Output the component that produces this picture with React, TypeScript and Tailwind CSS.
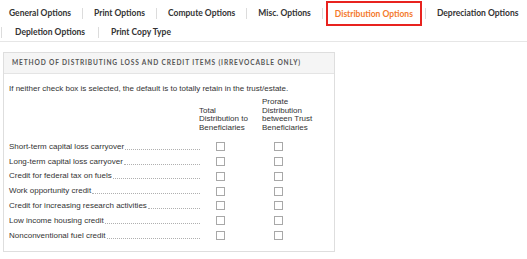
import React from "react";

const rows = [
  "Short-term capital loss carryover",
  "Long-term capital loss carryover",
  "Credit for federal tax on fuels",
  "Work opportunity credit",
  "Credit for increasing research activities",
  "Low income housing credit",
  "Nonconventional fuel credit",
];

const Sep = () => <span className="shrink-0 w-px h-[11px] bg-[#dcdcdc]" />;

const Tab = ({ children }: { children: React.ReactNode }) => (
  <span className="shrink-0 whitespace-nowrap px-[11px] text-[#333] font-bold">{children}</span>
);

const Box = () => (
  <span className="block w-[9px] h-[9px] border border-[#a8a8a8] bg-white" />
);

export default function App() {
  return (
    <div className="w-[527px] h-[259px] bg-white overflow-hidden">
      <div
        className="border-b border-[#e6e6e6] pb-[3px] text-[8.5px] leading-[12px]"
        style={{ fontFamily: "Lato, 'Open Sans', sans-serif" }}
      >
        <div className="flex items-center h-[26px] -ml-[2px] whitespace-nowrap">
          <Tab>General Options</Tab>
          <Sep />
          <Tab>Print Options</Tab>
          <Sep />
          <Tab>Compute Options</Tab>
          <Sep />
          <Tab>Misc. Options</Tab>
          <Sep />
          <span className="shrink-0 ml-[3px] mr-[3px] mt-[1px] h-[25px] flex items-center px-[7px] border-2 border-[#e8231f] text-[#f4792b] font-bold">
            Distribution Options
          </span>
          <Sep />
          <Tab>Depreciation Options</Tab>
        </div>
        <div className="flex items-center h-[12px] whitespace-nowrap">
          <span className="ml-[1px]" />
          <Sep />
          <span className="px-[13px] text-[#333] font-bold">Depletion Options</span>
          <Sep />
          <span className="px-[12px] text-[#333] font-bold">Print Copy Type</span>
        </div>
      </div>

      <div className="mt-[10px] ml-[3px] w-[332px] h-[200px] border border-[#dedede]">
        <div
          className="h-[21px] bg-[#f5f5f5] border-b border-[#e4e4e4] flex items-center pl-[8px] text-[6.6px] font-bold tracking-[0.85px] text-[#555]"
          style={{ fontFamily: "Lato, 'Open Sans', sans-serif" }}
        >
          METHOD OF DISTRIBUTING LOSS AND CREDIT ITEMS (IRREVOCABLE ONLY)
        </div>
        <div
          className="px-[5px] text-[8px] text-[#333]"
          style={{ fontFamily: "Arial, 'Liberation Sans', sans-serif" }}
        >
          <div className="mt-[10px] leading-[10px]">
            If neither check box is selected, the default is to totally retain in the trust/estate.
          </div>
          <div className="flex items-end mt-[4px] leading-[8.6px]">
            <div className="w-[190px]" />
            <div className="w-[63px]">
              Total
              <br />
              Distribution to
              <br />
              Beneficiaries
            </div>
            <div>
              Prorate
              <br />
              Distribution
              <br />
              between Trust
              <br />
              Beneficiaries
            </div>
          </div>
          <div className="mt-[7px]">
            {rows.map((r) => (
              <div key={r} className="flex items-center h-[14.8px]">
                <div className="w-[191px] flex items-end whitespace-nowrap leading-[10px]">
                  <span>{r}</span>
                  <span className="flex-1 mb-[2px] ml-[1px] border-b border-dotted border-[#b0b0b0]" />
                </div>
                <div className="w-[58px] flex pl-[16px]">
                  <Box />
                </div>
                <div className="flex pl-[16px]">
                  <Box />
                </div>
              </div>
            ))}
          </div>
        </div>
      </div>
    </div>
  );
}
